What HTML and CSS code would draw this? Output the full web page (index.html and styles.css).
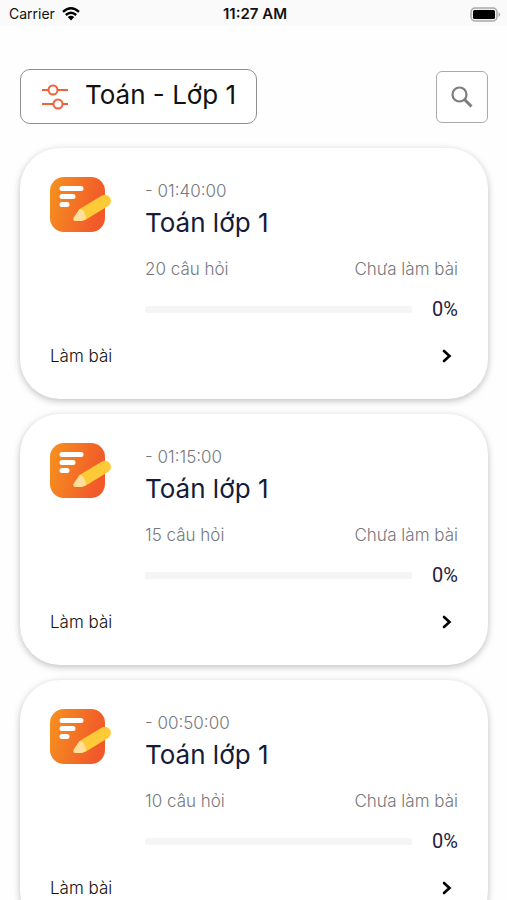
FILE: index.html
```html
<!DOCTYPE html>
<html lang="vi">
<head>
<meta charset="utf-8">
<meta name="viewport" content="width=device-width, initial-scale=1">
<title>Toán - Lớp 1</title>
<link rel="stylesheet" href="styles.css">
</head>
<body>
<svg class="defs" aria-hidden="true">
  <defs>
    <linearGradient id="orange" x1="0" y1="0" x2="1" y2="0.25">
      <stop offset="0" stop-color="#f6921e"/>
      <stop offset="1" stop-color="#f1592a"/>
    </linearGradient>
    <symbol id="exam" viewBox="0 0 62 55">
      <rect width="55" height="55" rx="14" fill="url(#orange)"/>
      <path d="M12 11.500H31M12 19.500H23M12 27.500H17" stroke="#fff" stroke-width="5" stroke-linecap="round"/>
      <path d="M29.500 32L52 18.500C58 15 65 24 58 29L36 42.500Z" fill="#ffca38"/>
      <path d="M29.500 32C33 32 36 37 36 42.500L32 44H26C23.500 44 22.500 42.500 24 40Z" fill="#ffdf9a"/>
    </symbol>
    <symbol id="chevron" viewBox="0 0 12 16">
      <path d="M3 3L8.500 8L3 13" fill="none" stroke="#000" stroke-width="2.600" stroke-linecap="round"/>
    </symbol>
  </defs>
</svg>
<header class="status">
  <div class="carrier">
    <span>Carrier</span>
    <svg width="18" height="14" viewBox="0 0 18 14" aria-hidden="true">
      <path d="M1 4.800Q9 -2.200 17 4.800M3.800 8Q9 3.500 14.200 8" fill="none" stroke="#000" stroke-width="2.400"/>
      <path d="M5.800 10Q9 7.300 12.200 10L9 13.500Z"/>
    </svg>
  </div>
  <time>11:27 AM</time>
  <svg class="battery" width="31" height="15" viewBox="0 0 31 15" aria-hidden="true">
    <rect x="1" y="1" width="26" height="13" rx="4" fill="#eee" stroke="#aaa" stroke-width="1.500"/>
    <rect x="3" y="3" width="22" height="9" rx="1.500"/>
    <path d="M28.500 5Q32 7.500 28.500 10Z" fill="#aaa"/>
  </svg>
</header>
<main>
  <div class="toolbar">
    <button class="filter" type="button">
      <svg width="28" height="26" viewBox="0 0 28 26" fill="none" stroke="#f1623a" stroke-width="2" aria-hidden="true">
        <path d="M1 6H7M17 6H27M1 20H12M22 20H27"/>
        <circle cx="12" cy="6" r="4.500"/>
        <circle cx="17" cy="20" r="4.500"/>
      </svg>
      <span>Toán - Lớp 1</span>
    </button>
    <button class="search" type="button" aria-label="Tìm kiếm">
      <svg width="22" height="22" viewBox="0 0 22 22" fill="none" stroke="#7d7d7d" aria-hidden="true">
        <circle cx="8.500" cy="8.500" r="7" stroke-width="2.200"/>
        <path d="M13.500 13.500L20.500 20.500" stroke-width="3"/>
      </svg>
    </button>
  </div>
  <article class="card">
    <svg class="exam" aria-hidden="true"><use href="#exam"/></svg>
    <div class="info">
      <p class="time">- 01:40:00</p>
      <h2>Toán lớp 1</h2>
      <div class="row"><span>20 câu hỏi</span><span>Chưa làm bài</span></div>
      <div class="progress"><span class="track"></span><span class="percent">0%</span></div>
    </div>
    <a class="start" href="#"><span>Làm bài</span><svg class="chevron" aria-hidden="true"><use href="#chevron"/></svg></a>
  </article>
  <article class="card">
    <svg class="exam" aria-hidden="true"><use href="#exam"/></svg>
    <div class="info">
      <p class="time">- 01:15:00</p>
      <h2>Toán lớp 1</h2>
      <div class="row"><span>15 câu hỏi</span><span>Chưa làm bài</span></div>
      <div class="progress"><span class="track"></span><span class="percent">0%</span></div>
    </div>
    <a class="start" href="#"><span>Làm bài</span><svg class="chevron" aria-hidden="true"><use href="#chevron"/></svg></a>
  </article>
  <article class="card">
    <svg class="exam" aria-hidden="true"><use href="#exam"/></svg>
    <div class="info">
      <p class="time">- 00:50:00</p>
      <h2>Toán lớp 1</h2>
      <div class="row"><span>10 câu hỏi</span><span>Chưa làm bài</span></div>
      <div class="progress"><span class="track"></span><span class="percent">0%</span></div>
    </div>
    <a class="start" href="#"><span>Làm bài</span><svg class="chevron" aria-hidden="true"><use href="#chevron"/></svg></a>
  </article>
</main>
</body>
</html>
```
FILE: styles.css
```css
* {
  box-sizing: border-box;
}

body {
  margin: 0;
  background: #fefefe;
  color: #111;
  font-family: Inter, "Noto Sans", sans-serif;
  font-size: 17px;
  font-weight: 300;
  scrollbar-width: none;
}

.defs {
  position: absolute;
  width: 0;
  height: 0;
}

.status {
  display: grid;
  grid-template-columns: 1fr auto 1fr;
  align-items: center;
  height: 26px;
  padding: 2px 6px 0 9px;
  background: #fafafa;
  font: 14px/20px Inter, sans-serif;
}

.status time {
  font-size: 15px;
  font-weight: 600;
}

.carrier {
  display: flex;
  align-items: center;
  gap: 7px;
}

.battery {
  justify-self: end;
}

main {
  padding: 43px 19px 0 20px;
}

.toolbar {
  display: flex;
  justify-content: space-between;
  align-items: center;
  margin-bottom: 24px;
}

button {
  border: 1px solid #8f8f8f;
  background: #fff;
  color: #111;
  font: inherit;
}

.filter {
  display: flex;
  align-items: center;
  gap: 16px;
  height: 55px;
  padding: 0 20px;
  border-radius: 10px;
  font-size: 26px;
  font-weight: 400;
  line-height: 32px;
}

.filter span {
  padding-bottom: 4px;
}

.search {
  display: grid;
  place-items: center;
  width: 52px;
  height: 52px;
  padding: 0;
  border-color: #aaa;
  border-radius: 6px;
}

.card {
  display: grid;
  grid-template-columns: 62px 1fr;
  column-gap: 33px;
  margin-bottom: 15px;
  padding: 29px 30px 31px;
  border-radius: 40px;
  background: #fff;
  box-shadow: 0 2px 7px rgba(0, 0, 0, 0.25);
}

.exam {
  width: 62px;
  height: 55px;
}

.time,
.row {
  margin: 0;
  color: #77777b;
  line-height: 24px;
}

.time {
  padding-top: 2px;
}

h2 {
  margin: 3px 0 17px;
  color: #141c38;
  font-size: 26px;
  font-weight: 400;
  line-height: 34px;
}

.row {
  display: flex;
  justify-content: space-between;
}

.progress {
  display: flex;
  align-items: center;
  gap: 20px;
  margin-top: 15px;
  color: #22223e;
  font: 20px/26px Roboto, sans-serif;
}

.track {
  flex: 1;
  height: 7px;
  border-radius: 2px;
  background: #f5f5f5;
}

.start {
  grid-column: 1 / -1;
  display: flex;
  align-items: center;
  justify-content: space-between;
  margin-top: 22px;
  padding-right: 5px;
  color: #111;
  line-height: 24px;
  text-decoration: none;
}

.chevron {
  width: 12px;
  height: 16px;
}
```
